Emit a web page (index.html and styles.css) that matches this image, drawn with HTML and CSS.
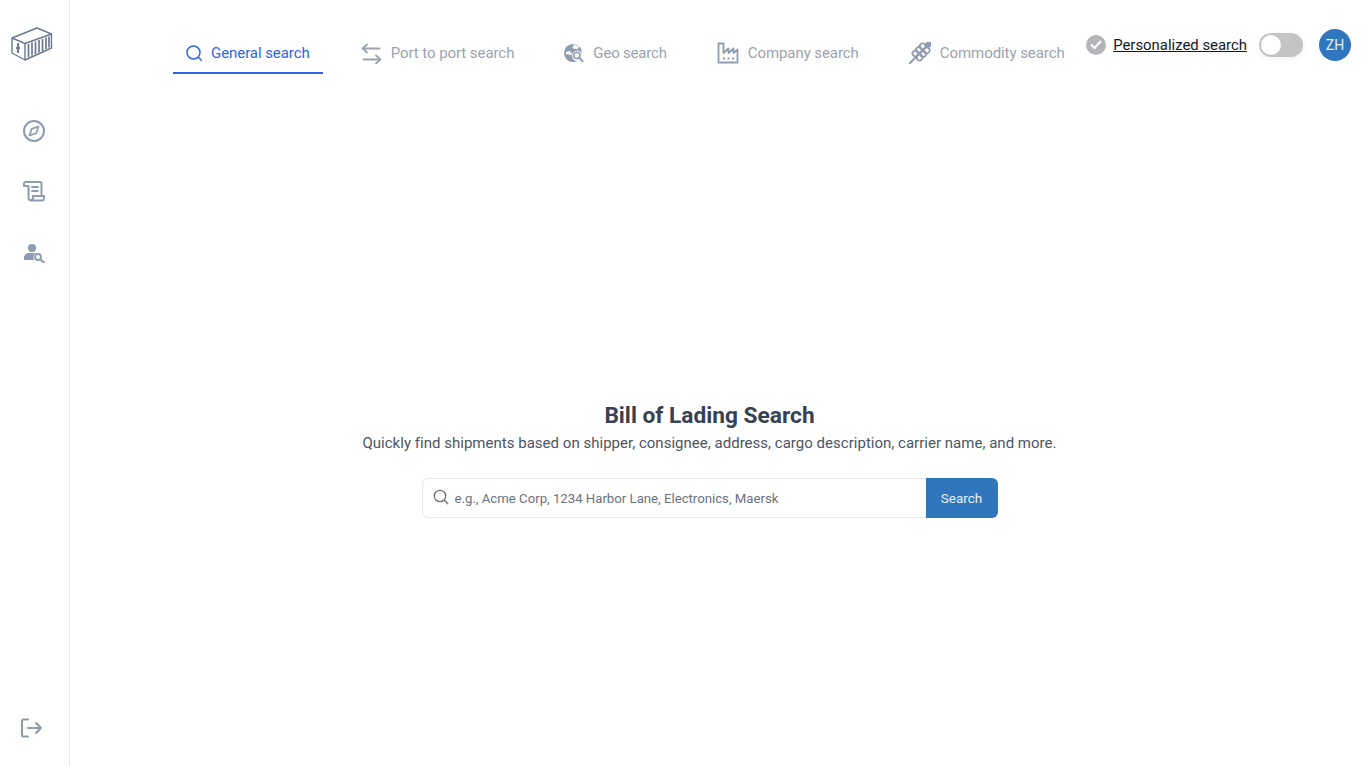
FILE: index.html
```html
<!DOCTYPE html>
<html lang="en">
<head>
  <meta charset="UTF-8">
  <title>Bill of Lading Search</title>
  <link rel="stylesheet" href="styles.css">
</head>
<body>
  <aside class="sidebar">
    <svg class="logo" width="42" height="34" viewBox="0 0 42 34" fill="none" stroke="#6b7a90" stroke-width="1.400" stroke-linejoin="round">
      <path d="M1 11 26 1 40.500 7 14 16.500Z"/>
      <path d="M1 11V26L14 33V16.500"/>
      <path d="M14 33 40.500 21V7"/>
      <path d="M17.500 17v13M21 15.500v13M24.500 14.500v12.500M28 13v12.500M31.500 12v12M35 10.500v11.500M38 9.500v11" stroke-width="1.700"/>
      <path d="M7 16v10M5 21h4" stroke-width="2"/>
    </svg>
    <nav class="side-nav">
      <a class="side-link" href="#">
        <svg width="24" height="24" viewBox="0 0 24 24" fill="none" stroke="#8e9bb0" stroke-width="2" stroke-linejoin="round"><circle cx="12" cy="12" r="10"/><path d="M16.500 7.500 14.200 14.200 7.500 16.500 9.800 9.800Z" stroke-width="1.800"/></svg>
      </a>
      <a class="side-link" href="#">
        <svg width="24" height="24" viewBox="0 0 24 24" fill="none" stroke="#8e9bb0" stroke-width="2" stroke-linejoin="round" stroke-linecap="round"><path d="M5 3h13a1.500 1.500 0 0 1 1.500 1.500V16"/><path d="M5 3a2 2 0 0 0-3 1.500V7h4.500V19a2.500 2.500 0 0 0 2.500 2.500h11.500a2 2 0 0 0 1.500-2V17H11v2a2.500 2.500 0 0 1-2.500 2.500"/><path d="M10 8h6M10 12h6" stroke-width="1.800"/></svg>
      </a>
      <a class="side-link" href="#">
        <svg width="24" height="24" viewBox="0 -4 24 24" fill="#8e9bb0"><circle cx="10" cy="5" r="4"/><path d="M2 17v-2.500c0-2.500 2.500-4.500 5-4.500h6.500a6.500 6.500 0 0 0-1.500 7Z"/><circle cx="16" cy="14" r="3" fill="none" stroke="#8e9bb0" stroke-width="1.800"/><path d="m18.500 16.500 3.500 3" stroke="#8e9bb0" stroke-width="2" stroke-linecap="round"/></svg>
      </a>
    </nav>
    <a class="side-link logout" href="#">
      <svg width="24" height="24" viewBox="0 0 24 24" fill="none" stroke="#8e9bb0" stroke-width="2" stroke-linecap="round" stroke-linejoin="round"><path d="M9 3.500H4.500a1.500 1.500 0 0 0-1.500 1.500v14a1.500 1.500 0 0 0 1.500 1.500H9"/><path d="M9 12h13M17 7l5 5-5 5"/></svg>
    </a>
  </aside>

  <main class="main">
    <header class="topbar">
      <nav class="tabs">
        <a class="tab active" href="#">
          <svg width="16" height="16" viewBox="0 0 16 16" fill="none" stroke="#2f66eb" stroke-width="1.500" stroke-linecap="round"><circle cx="7.500" cy="7.500" r="6.500"/><path d="m12.300 12.300 3 3"/></svg>
          General search
        </a>
        <a class="tab" href="#">
          <svg width="21" height="21" viewBox="0 0 21 21" fill="none" stroke="#9ca3af" stroke-width="1.800" stroke-linecap="round" stroke-linejoin="round"><path d="M1.500 5.500h17M6 1.500 1.500 5.500 6 9.500"/><path d="M19.500 16.500h-17M15 12.500l4.500 4-4.500 4"/></svg>
          Port to port search
        </a>
        <a class="tab geo" href="#">
          <svg width="20" height="20" viewBox="0 0 21 21"><circle cx="9.500" cy="10.500" r="9.500" fill="#8e9bb0"/><circle cx="14" cy="13.500" r="5.500" fill="#fff"/><circle cx="13.500" cy="13" r="3.300" fill="none" stroke="#8e9bb0" stroke-width="1.700"/><path d="m16 15.500 3.500 3.500" stroke="#8e9bb0" stroke-width="2" stroke-linecap="round"/><path d="M2 9.500l4-1 3 3-2 1-5-1ZM10 1.500l6 2-2 3-5-1Z" fill="#fff"/></svg>
          Geo search
        </a>
        <a class="tab" href="#">
          <svg width="22" height="22" viewBox="0 0 22 22" fill="none" stroke="#8e9bb0" stroke-width="1.800" stroke-linejoin="round"><path d="M1.500 1.500h5v9.500l5-4.500v4.500l5-4.500v4.500l4-3.500V20.500H1.500Z"/><path d="M6 16.500h2M10.500 16.500h2M15 16.500h2"/></svg>
          Company search
        </a>
        <a class="tab" href="#">
          <svg width="22" height="22" viewBox="0 0 22 22" fill="none" stroke="#8e9bb0" stroke-width="1.700"><g transform="rotate(45 11 11)"><ellipse cx="11" cy="-1" rx="2.200" ry="3" fill="#8e9bb0"/><ellipse cx="8" cy="4.500" rx="2.800" ry="3"/><ellipse cx="14" cy="4.500" rx="2.800" ry="3"/><ellipse cx="8" cy="9.500" rx="2.800" ry="3"/><ellipse cx="14" cy="9.500" rx="2.800" ry="3"/><ellipse cx="8" cy="14.500" rx="2.800" ry="3"/><ellipse cx="14" cy="14.500" rx="2.800" ry="3"/><path d="M11 14v11.500" stroke-width="2" stroke-linecap="round"/></g></svg>
          Commodity search
        </a>
      </nav>
      <div class="account">
        <span class="check">
          <svg width="12" height="10" viewBox="0 0 12 10" fill="none" stroke="#fff" stroke-width="2" stroke-linecap="round" stroke-linejoin="round"><path d="m1.500 5 3 3 6-6.500"/></svg>
        </span>
        <a class="personalized" href="#">Personalized search</a>
        <span class="toggle"><span class="knob"></span></span>
        <span class="avatar">ZH</span>
      </div>
    </header>

    <section class="hero">
      <h1>Bill of Lading Search</h1>
      <p class="subtitle">Quickly find shipments based on shipper, consignee, address, cargo description, carrier name, and more.</p>
      <form class="search-form">
        <div class="search-input">
          <svg width="16" height="16" viewBox="0 0 16 16" fill="none" stroke="#6b7280" stroke-width="1.300" stroke-linecap="round"><circle cx="7" cy="7" r="5.700"/><path d="m11.300 11.300 3.500 3.500"/></svg>
          <input type="text" placeholder="e.g., Acme Corp, 1234 Harbor Lane, Electronics, Maersk">
        </div>
        <button type="button">Search</button>
      </form>
    </section>
  </main>
</body>
</html>
```

FILE: styles.css
```css
body {
  font-family: Roboto, Arial, sans-serif;
  margin: 0;
  padding: 0;
  background-color: white;
  display: flex;
  height: 766px;
  overflow: hidden;
}

a {
  text-decoration: none;
}

.sidebar {
  width: 69px;
  border-right: 1px solid #e5e7eb;
  display: flex;
  flex-direction: column;
  align-items: center;
  flex-shrink: 0;
}

.logo {
  margin-top: 27px;
  margin-right: 5px;
}

.side-nav {
  display: flex;
  flex-direction: column;
  gap: 36px;
  margin-top: 58px;
  margin-right: 2px;
}

.side-link {
  display: block;
  height: 24px;
}

.logout {
  margin-top: auto;
  margin-bottom: 26px;
  margin-right: 7px;
}

.main {
  flex: 1;
  display: flex;
  flex-direction: column;
}

.topbar {
  display: flex;
  justify-content: space-between;
  padding: 29px 16px 0 103px;
  height: 45px;
}

.tabs {
  display: flex;
  gap: 24px;
  height: 45px;
}

.tab {
  display: flex;
  align-items: center;
  gap: 9px;
  padding: 5px 13px 0;
  box-sizing: border-box;
  font-size: 15px;
  letter-spacing: -0.07px;
  color: #9ca3af;
  border-bottom: 2px solid transparent;
  white-space: nowrap;
}

.tab.active {
  color: #2f66eb;
  border-bottom-color: #2f66eb;
  margin-right: 1px;
}

.tab.geo {
  letter-spacing: -0.2px;
}

.account {
  display: flex;
  align-items: center;
  height: 32px;
}

.check {
  width: 20px;
  height: 20px;
  border-radius: 50%;
  background-color: #b3b5bb;
  display: flex;
  align-items: center;
  justify-content: center;
  margin-right: 7px;
}

.personalized {
  font-size: 14.900px;
  color: #111827;
  text-decoration: underline;
  white-space: nowrap;
}

.toggle {
  width: 44px;
  height: 24px;
  border-radius: 12px;
  background-color: #c4c4c4;
  margin-left: 12px;
  padding: 2px;
  box-sizing: border-box;
  box-shadow: 0 2px 6px rgba(0, 0, 0, 0.06);
}

.knob {
  display: block;
  width: 20px;
  height: 20px;
  border-radius: 50%;
  background-color: white;
}

.avatar {
  width: 32px;
  height: 32px;
  border-radius: 50%;
  background-color: #2f76bd;
  color: #e8f1fa;
  font-size: 14px;
  display: flex;
  align-items: center;
  justify-content: center;
  margin-left: 16px;
}

.hero {
  display: flex;
  flex-direction: column;
  align-items: center;
  padding: 326px 18px 0 0;
}

h1 {
  font-size: 22.700px;
  font-weight: 700;
  line-height: 32px;
  color: #374151;
  margin: 0;
}

.subtitle {
  font-size: 15px;
  letter-spacing: 0.02px;
  line-height: 22px;
  color: #4b5563;
  margin: 0;
  white-space: nowrap;
}

.search-form {
  display: flex;
  width: 576px;
  height: 40px;
  margin-top: 24px;
}

.search-input {
  flex: 1;
  display: flex;
  align-items: center;
  gap: 6px;
  padding: 0 0 0 10px;
  border: 1px solid #e5e7eb;
  border-right: none;
  border-radius: 6px 0 0 6px;
}

.search-input svg {
  margin-top: -3px;
}

input {
  flex: 1;
  border: none;
  outline: none;
  padding: 0;
  font-family: inherit;
  font-size: 13.200px;
  color: #374151;
}

input::placeholder {
  color: #6b7280;
  opacity: 1;
}

button {
  width: 72px;
  background-color: #2f76bd;
  border: none;
  border-radius: 0 6px 6px 0;
  color: #e8f1fa;
  font-family: inherit;
  font-size: 13.500px;
  cursor: pointer;
}
```
